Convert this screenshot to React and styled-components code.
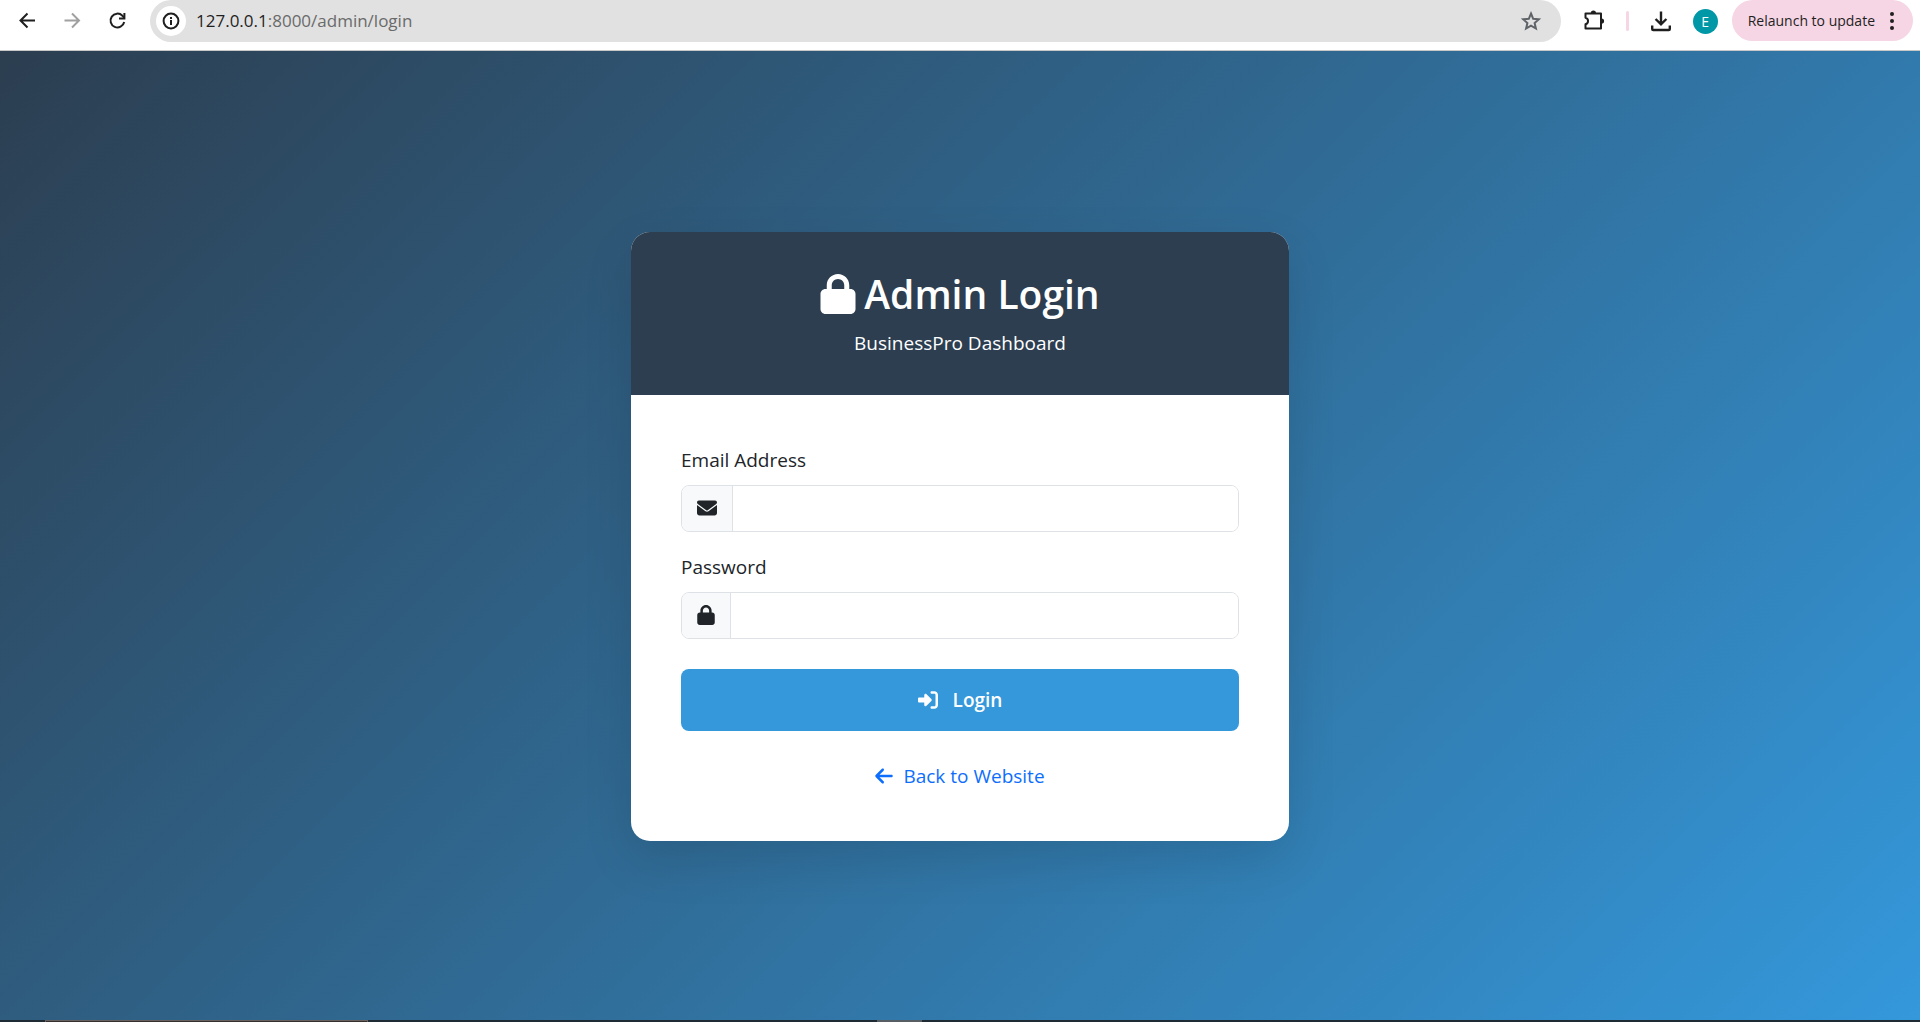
import React, { useState } from 'react';
import styled, { createGlobalStyle } from 'styled-components';
import { FaArrowLeft, FaEnvelope, FaLock, FaRightToBracket } from 'react-icons/fa6';

const App = () => {
    const [email, setEmail] = useState("");
    const [password, setPassword] = useState("");

    return (
        <Screen>
            <GlobalStyle />
            <Toolbar>
                <NavButtons>
                    <IconButton aria-label="Back"><BackIcon /></IconButton>
                    <IconButton aria-label="Forward" $muted><ForwardIcon /></IconButton>
                    <IconButton aria-label="Reload"><ReloadIcon /></IconButton>
                </NavButtons>
                <AddressBar>
                    <SiteInfo aria-label="Site information"><InfoIcon /></SiteInfo>
                    <Url><UrlHost>127.0.0.1</UrlHost>:8000/admin/login</Url>
                    <IconButton aria-label="Bookmark" $soft><StarIcon /></IconButton>
                </AddressBar>
                <Actions>
                    <IconButton aria-label="Extensions"><PuzzleIcon /></IconButton>
                    <Separator />
                    <IconButton aria-label="Downloads"><DownloadIcon /></IconButton>
                    <Avatar>E</Avatar>
                </Actions>
                <UpdateButton>
                    Relaunch to update
                    <DotsIcon />
                </UpdateButton>
            </Toolbar>
            <Page>
                <Card>
                    <CardHeader>
                        <Title><FaLock /> Admin Login</Title>
                        <Subtitle>BusinessPro Dashboard</Subtitle>
                    </CardHeader>
                    <Form onSubmit={(e) => e.preventDefault()}>
                        <Field>
                            <Label htmlFor="email">Email Address</Label>
                            <InputGroup>
                                <InputIcon><FaEnvelope /></InputIcon>
                                <Input
                                    id="email"
                                    type="email"
                                    value={email}
                                    onChange={(e) => setEmail(e.target.value)}
                                />
                            </InputGroup>
                        </Field>
                        <Field>
                            <Label htmlFor="password">Password</Label>
                            <InputGroup>
                                <InputIcon $narrow><FaLock /></InputIcon>
                                <Input
                                    id="password"
                                    type="password"
                                    value={password}
                                    onChange={(e) => setPassword(e.target.value)}
                                />
                            </InputGroup>
                        </Field>
                        <LoginButton type="submit"><FaRightToBracket /> Login</LoginButton>
                        <BackLink href="#"><FaArrowLeft /> Back to Website</BackLink>
                    </Form>
                </Card>
            </Page>
            <Taskbar>
                <TaskbarWindow />
                <TaskbarActive />
            </Taskbar>
        </Screen>
    )
}

const BackIcon = () => (
    <svg width="24" height="24" viewBox="0 0 24 24" fill="none" stroke="currentColor" strokeWidth="2">
        <path d="M20 11.5H5.5M12.5 4.5l-7 7 7 7" />
    </svg>
)

const ForwardIcon = () => (
    <svg width="24" height="24" viewBox="0 0 24 24" fill="none" stroke="currentColor" strokeWidth="2">
        <path d="M4.5 11.5H19M12 4.5l7 7-7 7" />
    </svg>
)

const ReloadIcon = () => (
    <svg width="24" height="24" viewBox="0 0 24 24" fill="none" stroke="currentColor" strokeWidth="2">
        <path d="M19.2 13A6.9 6.9 0 1 1 17.4 6.7L19 8.6" />
        <path d="M19.4 4v5.4H14" />
    </svg>
)

const InfoIcon = () => (
    <svg width="18" height="18" viewBox="0 0 18 18" fill="none" stroke="currentColor" strokeWidth="2">
        <circle cx="9" cy="9" r="7.4" />
        <path d="M9 8v5M9 5v2" />
    </svg>
)

const StarIcon = () => (
    <svg width="24" height="24" viewBox="0 0 24 24" fill="none" stroke="currentColor" strokeWidth="2">
        <path d="M12 4.5l2.2 5.3 5.6.5-4.2 3.7 1.3 5.5-4.9-2.9-4.9 2.9L8.4 14l-4.2-3.7 5.6-.5z" />
    </svg>
)

const PuzzleIcon = () => (
    <svg width="24" height="24" viewBox="0 0 24 24" fill="none" stroke="currentColor" strokeWidth="2" strokeLinejoin="round">
        <path d="M3.5 4.5h15.5v15H3.5v-4.2c3.4-1 3.4-5.6 0-6.6z" />
        <path d="M8.8 4a2.6 2.6 0 0 1 5.2 0zM19.5 9.4a2.6 2.6 0 0 1 0 5.2z" fill="currentColor" stroke="none" />
    </svg>
)

const DownloadIcon = () => (
    <svg width="24" height="24" viewBox="0 0 24 24" fill="none" stroke="currentColor" strokeWidth="2.4">
        <path d="M12 2.5v13M6.6 10l5.4 5.4 5.4-5.4M3.2 16.5V20q0 1 1 1h15.6q1 0 1-1v-3.5" />
    </svg>
)

const DotsIcon = () => (
    <svg width="6" height="20" viewBox="0 0 6 20" fill="currentColor">
        <circle cx="3" cy="3" r="2" />
        <circle cx="3" cy="10" r="2" />
        <circle cx="3" cy="17" r="2" />
    </svg>
)


const GlobalStyle = createGlobalStyle`
    * {
        box-sizing: border-box;
    }

    body {
        margin: 0;
        color: #212529;
        font-family: "Segoe UI", "Open Sans", "Noto Sans", sans-serif;
        font-size: 19px;
        line-height: 30px;
    }

    button, input {
        font: inherit;
    }
`;

const Screen = styled.div`
    display: flex;
    flex-direction: column;
    min-height: 100vh;
`;

const Toolbar = styled.header`
    display: flex;
    align-items: flex-start;
    padding: 0 7px 8px 15px;
    border-bottom: 1px solid #c8c8c8;
    background: #fff;
    color: #1f1f1f;
`;

const NavButtons = styled.nav`
    display: flex;
    align-items: center;
    gap: 21px;
    height: 42px;
    margin-right: 21px;
`;

const IconButton = styled.button`
    display: flex;
    padding: 0;
    border: 0;
    background: none;
    color: ${({ $muted, $soft }) => $muted ? "#a0a0a0" : $soft ? "#5f6368" : "#1f1f1f"};
`;

const AddressBar = styled.div`
    display: flex;
    flex: 1;
    align-items: center;
    height: 42px;
    padding: 0 18px 0 6px;
    border-radius: 21px;
    background: #e1e1e1;
`;

const SiteInfo = styled.button`
    display: flex;
    align-items: center;
    justify-content: center;
    width: 30px;
    height: 30px;
    padding: 0;
    border: 0;
    border-radius: 50%;
    background: #fff;
    color: #1f1f1f;
`;

const Url = styled.div`
    flex: 1;
    margin-left: 10px;
    color: #6a6a6a;
    font-size: 17px;
`;

const UrlHost = styled.span`
    color: #1f1f1f;
`;

const Actions = styled.div`
    display: flex;
    align-items: center;
    gap: 20px;
    height: 42px;
    margin: 0 14px 0 21px;
`;

const Separator = styled.div`
    width: 3px;
    height: 20px;
    border-radius: 2px;
    background: #f6d5e4;
`;

const Avatar = styled.div`
    width: 25px;
    height: 25px;
    border-radius: 50%;
    background: #0097a7;
    color: #fff;
    font-size: 14px;
    line-height: 25px;
    text-align: center;
`;

const UpdateButton = styled.button`
    display: flex;
    align-items: center;
    gap: 14px;
    height: 41px;
    padding: 0 18px 0 16px;
    border: 0;
    border-radius: 21px;
    background: #f6d5e4;
    color: #1f1f1f;
    font-size: 14px;
    white-space: nowrap;
`;

const Page = styled.main`
    display: flex;
    flex: 1;
    align-items: center;
    justify-content: center;
    background: linear-gradient(135deg, #2c3e50 0%, #3498db 100%);
`;

const Card = styled.section`
    width: 100%;
    max-width: 658px;
    border-radius: 19px;
    overflow: hidden;
    background: #fff;
    box-shadow: 0 19px 50px rgba(0, 0, 0, 0.12);
`;

const CardHeader = styled.div`
    padding: 38px 38px 37px;
    background: #2c3e50;
    color: #fff;
    text-align: center;
`;

const Title = styled.h1`
    display: flex;
    align-items: center;
    justify-content: center;
    gap: 8px;
    margin: 0 0 10px;
    font-size: 39px;
    font-weight: 600;
    line-height: 48px;

    svg {
        width: 36px;
        height: 40px;
    }
`;

const Subtitle = styled.p`
    margin: 0;
`;

const Form = styled.form`
    display: flex;
    flex-direction: column;
    padding: 50px;
`;

const Field = styled.div`
    margin-bottom: 20px;
`;

const Label = styled.label`
    display: block;
    margin-bottom: 10px;
`;

const InputGroup = styled.div`
    display: flex;
    height: 47px;
    border: 1px solid #dee2e6;
    border-radius: 8px;
    overflow: hidden;
`;

const InputIcon = styled.span`
    display: flex;
    align-items: center;
    padding: 0 15px 2px;
    border-right: 1px solid #dee2e6;
    background: #f8f9fa;

    svg {
        width: ${({ $narrow }) => $narrow ? "18px" : "20px"};
        height: 20px;
    }
`;

const Input = styled.input`
    flex: 1;
    min-width: 0;
    padding: 0 15px;
    border: 0;
    outline: 0;
    background: #fff;
    color: #212529;
`;

const LoginButton = styled.button`
    display: flex;
    align-items: center;
    justify-content: center;
    gap: 15px;
    height: 62px;
    margin: 10px 0 30px;
    border: 0;
    border-radius: 8px;
    background: #3498db;
    color: #fff;
    font-weight: 600;

    svg {
        width: 20px;
        height: 20px;
    }
`;

const BackLink = styled.a`
    display: flex;
    align-items: center;
    align-self: center;
    gap: 10px;
    color: #0d6efd;
    text-decoration: none;

    svg {
        width: 18px;
        height: 20px;
    }
`;

const Taskbar = styled.div`
    position: fixed;
    right: 0;
    bottom: 0;
    left: 0;
    display: flex;
    height: 2px;
    padding-left: 45px;
    background: #1f2b34;
`;

const TaskbarWindow = styled.div`
    width: 323px;
    border: 1px solid #66615f;
    border-bottom: 0;
    background: #35302e;
`;

const TaskbarActive = styled.div`
    width: 45px;
    margin-left: 509px;
    background: #565e63;
`;

export default App;
